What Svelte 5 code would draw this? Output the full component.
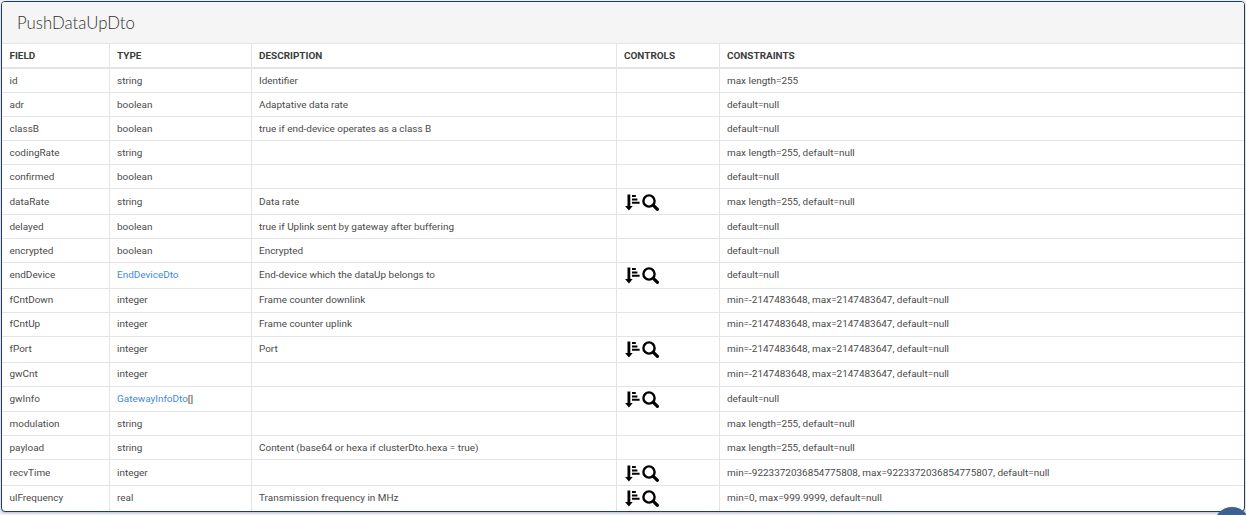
<script>
    const minMaxInt = "min=-2147483648, max=2147483647, default=null";
    const maxLen = "max length=255, default=null";

    const rows = [
        { field: "id", type: "string", desc: "Identifier", constraints: "max length=255" },
        { field: "adr", type: "boolean", desc: "Adaptative data rate", constraints: "default=null" },
        { field: "classB", type: "boolean", desc: "true if end-device operates as a class B", constraints: "default=null" },
        { field: "codingRate", type: "string", desc: "", constraints: maxLen },
        { field: "confirmed", type: "boolean", desc: "", constraints: "default=null" },
        { field: "dataRate", type: "string", desc: "Data rate", controls: true, constraints: maxLen },
        { field: "delayed", type: "boolean", desc: "true if Uplink sent by gateway after buffering", constraints: "default=null" },
        { field: "encrypted", type: "boolean", desc: "Encrypted", constraints: "default=null" },
        { field: "endDevice", link: "EndDeviceDto", desc: "End-device which the dataUp belongs to", controls: true, constraints: "default=null" },
        { field: "fCntDown", type: "integer", desc: "Frame counter downlink", constraints: minMaxInt },
        { field: "fCntUp", type: "integer", desc: "Frame counter uplink", constraints: minMaxInt },
        { field: "fPort", type: "integer", desc: "Port", controls: true, constraints: minMaxInt },
        { field: "gwCnt", type: "integer", desc: "", constraints: minMaxInt },
        { field: "gwInfo", link: "GatewayInfoDto", suffix: "[]", desc: "", controls: true, constraints: "default=null" },
        { field: "modulation", type: "string", desc: "", constraints: maxLen },
        { field: "payload", type: "string", desc: "Content (base64 or hexa if clusterDto.hexa = true)", constraints: maxLen },
        { field: "recvTime", type: "integer", desc: "", controls: true, constraints: "min=-9223372036854775808, max=9223372036854775807, default=null" },
        { field: "ulFrequency", type: "real", desc: "Transmission frequency in MHz", controls: true, constraints: "min=0, max=999.9999, default=null" }
    ];
</script>

<main class="page">
    <section class="panel">
        <h3 class="title">PushDataUpDto</h3>
        <table>
            <colgroup>
                <col style="width:107px" />
                <col style="width:142px" />
                <col style="width:365px" />
                <col style="width:103px" />
                <col />
            </colgroup>
            <thead>
                <tr>
                    <th>FIELD</th>
                    <th>TYPE</th>
                    <th>DESCRIPTION</th>
                    <th>CONTROLS</th>
                    <th>CONSTRAINTS</th>
                </tr>
            </thead>
            <tbody>
                {#each rows as row}
                    <tr>
                        <td>{row.field}</td>
                        <td>
                            {#if row.link}<a href="#top">{row.link}</a>{row.suffix ?? ""}{:else}{row.type}{/if}
                        </td>
                        <td>{row.desc}</td>
                        <td class="controls">
                            {#if row.controls}
                                <div class="icons">
                                    <svg width="16" height="17" viewBox="0 0 16 17" aria-hidden="true">
                                        <path d="M3.5 0.5h2.8v11.5h2.4l-3.8 4.6-3.8-4.6h2.4z" />
                                        <path d="M8 1h3.8v2H8zM8 4.4h5.4v2H8zM8 7.8h7.6v2H8z" />
                                    </svg>
                                    <svg width="17" height="17" viewBox="0 0 17 17" aria-hidden="true">
                                        <circle cx="7" cy="7" r="5.6" fill="none" stroke="#000" stroke-width="2.4" />
                                        <path d="M11.4 11.4l4 4" stroke="#000" stroke-width="3.2" stroke-linecap="round" />
                                    </svg>
                                </div>
                            {/if}
                        </td>
                        <td>{row.constraints}</td>
                    </tr>
                {/each}
            </tbody>
        </table>
    </section>
    <div class="fab"></div>
</main>

<style>
    :global(body) {
        margin: 0;
        background: #eef0f3;
        font-family: Roboto, "Liberation Sans", sans-serif;
    }

    .page {
        position: relative;
        height: 515px;
        overflow: hidden;
        padding: 1px 1px 0;
        box-sizing: border-box;
    }

    .panel {
        width: 1244px;
        border: 1px solid #1f3a68;
        border-radius: 4px;
        background: #fff;
        box-shadow: 0 1px 2px rgba(0, 0, 0, 0.2);
        box-sizing: border-box;
        overflow: hidden;
    }

    .title {
        margin: 0;
        height: 41px;
        padding-left: 15px;
        line-height: 41px;
        font-family: Lato, sans-serif;
        font-size: 16.8px;
        font-weight: 300;
        color: #333;
        background: #f5f5f5;
    }

    table {
        width: 100%;
        table-layout: fixed;
        border-collapse: collapse;
        font-size: 9.95px;
        color: #4a4a4a;
    }

    th, td {
        padding: 0 7.5px 1px;
        text-align: left;
        border: 1px solid #e2e4e8;
        white-space: nowrap;
    }

    th:first-child, td:first-child { border-left: 0; }
    th:last-child, td:last-child { border-right: 0; }
    tbody tr:last-child td { border-bottom: 0; }

    th {
        height: 22px;
        font-weight: 700;
        color: #3c3c3c;
        border-bottom-width: 2px;
    }

    td { height: 22.08px; }

    td.controls { padding: 0 7px; }

    .icons {
        display: flex;
        align-items: center;
        gap: 2px;
        height: 24.61px;
        padding-top: 1px;
        box-sizing: border-box;
    }

    a {
        color: #3f88e0;
        text-decoration: none;
    }

    .fab {
        position: absolute;
        right: -4px;
        top: 507px;
        width: 36px;
        height: 36px;
        border-radius: 50%;
        background: #3f5f8f;
    }
</style>
